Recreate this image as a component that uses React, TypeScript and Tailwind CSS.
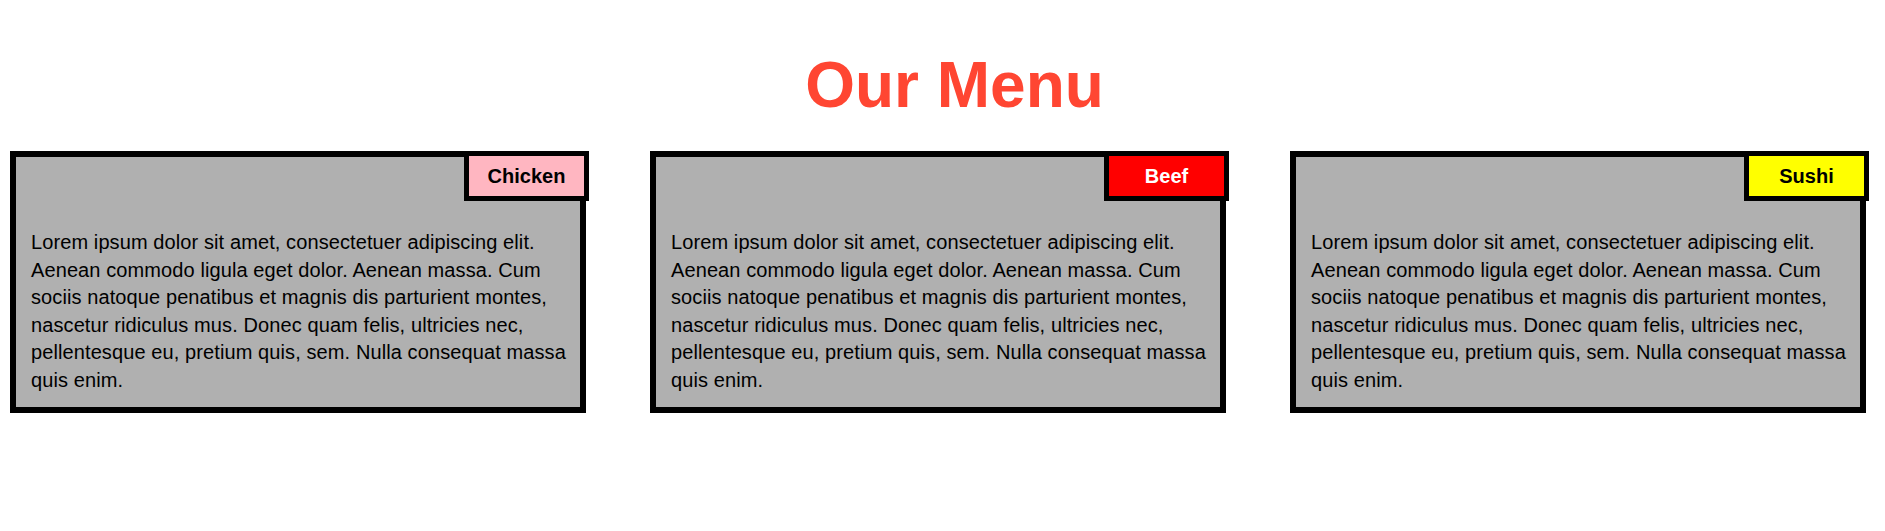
import React from "react";

const lorem =
  "Lorem ipsum dolor sit amet, consectetuer adipiscing elit. Aenean commodo ligula eget dolor. Aenean massa. Cum sociis natoque penatibus et magnis dis parturient montes, nascetur ridiculus mus. Donec quam felis, ultricies nec, pellentesque eu, pretium quis, sem. Nulla consequat massa quis enim.";

const dishes = [
  { name: "Chicken", tag: "bg-[#ffb6c1] text-black" },
  { name: "Beef", tag: "bg-[#ff0000] text-white" },
  { name: "Sushi", tag: "bg-[#ffff00] text-black" },
];

const MenuCard = ({ name, tag }: { name: string; tag: string }) => (
  <div className="relative w-[576px] border-[6px] border-black bg-[#b0b0b0] pt-[72px] pb-[12px] pl-[15px] pr-[4px]">
    <div
      className={`absolute top-[-6px] right-[-9px] flex h-[50px] w-[125px] items-center justify-center border-[5px] border-black text-[20px] font-bold ${tag}`}
    >
      {name}
    </div>
    <p className="text-[20px] leading-[27.6px] tracking-[0.1px] text-black">{lorem}</p>
  </div>
);

export default function App() {
  return (
    <div className="min-h-screen bg-white font-['Comic_Sans_MS','Liberation_Sans',sans-serif]">
      <h1 className="pt-[40px] pb-[21px] pl-6 text-center text-[64px] leading-[90px] font-bold text-[#ff4632]">
        Our Menu
      </h1>
      <div className="flex gap-[64px] pl-[10px]">
        {dishes.map((d) => (
          <MenuCard key={d.name} name={d.name} tag={d.tag} />
        ))}
      </div>
    </div>
  );
}
